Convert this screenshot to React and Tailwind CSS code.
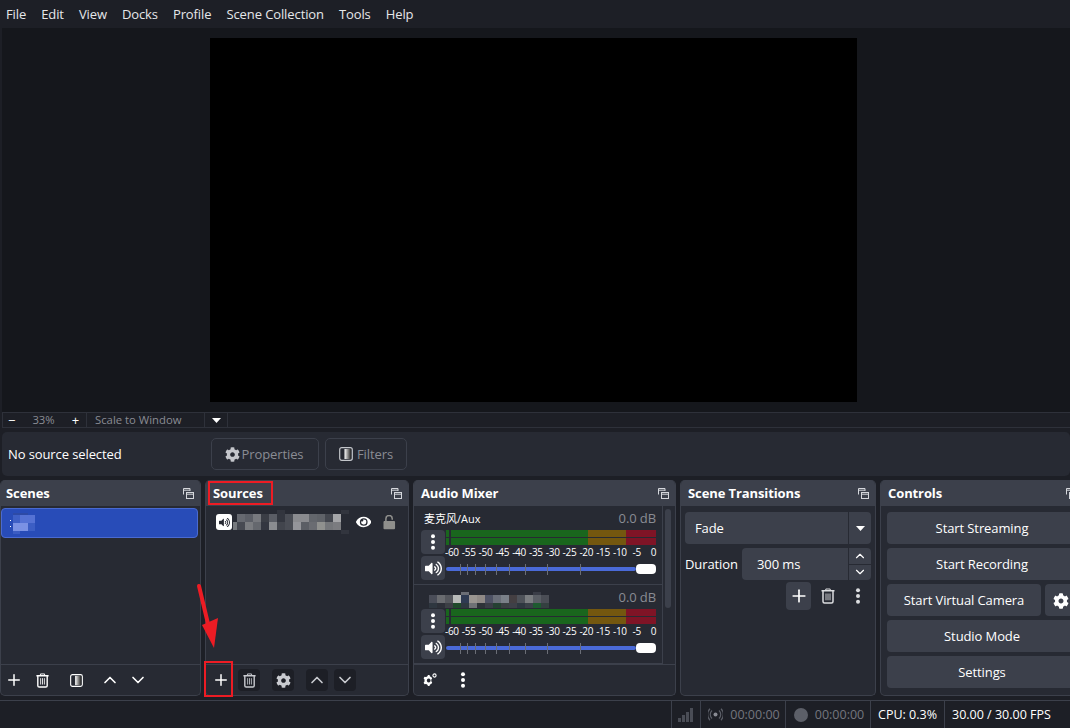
import React from "react";
import { FaCog, FaEye, FaVolumeUp } from "react-icons/fa";
import { Plus, ChevronUp, ChevronDown } from "lucide-react";

const Trash = ({ c = "#fff", s = 16 }) => (
  <svg width={s} height={s} viewBox="0 0 16 16" fill="none" stroke={c} strokeWidth="1.5">
    <path d="M1.5 2.8h13" strokeWidth="1.6" />
    <path d="M5.8 2.5V1h4.4v1.5" strokeWidth="1" />
    <path d="M3 3v10.5a1.5 1.5 0 0 0 1.5 1.5h7a1.5 1.5 0 0 0 1.5-1.5V3" />
    <path d="M6 5.5v6.8M8 5.5v6.8M10 5.5v6.8" strokeWidth="0.9" />
  </svg>
);

const Dots = ({ c = "#fff" }) => (
  <svg width="6" height="16" viewBox="0 0 6 16" fill={c}>
    <circle cx="3" cy="2.2" r="2" />
    <circle cx="3" cy="8" r="2" />
    <circle cx="3" cy="13.8" r="2" />
  </svg>
);

const FilterIcon = ({ s = 14, c = "#fff" }) => (
  <svg width={s} height={s} viewBox="0 0 14 14">
    <defs>
      <linearGradient id="fg">
        <stop offset="0" stopColor="#fff" />
        <stop offset="1" stopColor="#222" />
      </linearGradient>
    </defs>
    <rect x="0.7" y="0.7" width="12.6" height="12.6" rx="2" fill="none" stroke={c} strokeWidth="1.2" />
    <rect x="5.5" y="2" width="6.5" height="10" fill="url(#fg)" />
  </svg>
);

const Popout = () => (
  <svg width="11" height="11" viewBox="0 0 11 11" fill="none" stroke="#d5d7dc" strokeWidth="1">
    <path d="M.5 6.5v-6h6.5v2.5" />
    <path d="M.5 2.2h6.5" />
    <rect x="3.5" y="4.5" width="7" height="6" fill="#3c404b" />
    <path d="M3.5 6.2h7" />
  </svg>
);

const Mosaic = ({ cells, cols, rows, className = "" }) => (
  <div className={`grid shrink-0 ${className}`} style={{ gridTemplateColumns: cols, gridTemplateRows: rows }}>
    {cells.map((c, i) => (
      <div key={i} style={{ background: c }} />
    ))}
  </div>
);

const B = "transparent";
const F = "#32353e";
const sceneMosaic = [
  "#2d4aa6", "#2d4aa6", B,
  "#3f60c6", "#5572d4", "#5572d4",
  "#7b92e4", "#7b92e4", "#3c5ec4",
  "#3b5cc2", B, B,
];
const sourceMosaic = [
  B, B, B, B, B, B, F, B, B, B, B, B, B, B, F,
  B, "#666970", "#5c5f67", "#77797e", "#3a3d45", "#5a5d65", "#33363f", "#4a4d55", "#8a8b8f", "#8a8b8f", "#63666c", "#5f6268", "#44474f", "#a4a5a8", B,
  "#777a7e", "#474a52", "#7a7c80", "#65686e", "#333640", "#8a8c90", "#42454d", "#4a4d55", "#94959a", "#5b5e65", "#6a6c72", "#90918f", "#74767a", "#7b7c80", B,
  B, B, B, B, B, B, B, B, B, B, B, B, B, B, F,
];
const audioMosaic = [
  B, B, B, B, "#6a6d75", B, B, B, B, B, B, B, B, "#3a3d47", B,
  "#4a4d58", "#6a6c70", "#55575d", "#b8bab8", "#2e3a52", "#9a9590", "#908a86", "#4e5264", "#6a6e78", "#7a8088", "#443f42", "#4e5259", "#7a7d80", "#5a5e65", "#4a4d55",
  "#2f3740", "#2d3038", "#3c3f45", "#1f4a2a", "#2e3840", "#6f7175", "#2e3338", "#3a3d46", "#254032", "#3a3f42", "#3e4048", "#2e3740", "#3a4048", "#1e5a30", "#344040",
];

const Panel = ({ title, width, children, footer, titleClass = "" }) => (
  <div className={`${width} h-full shrink-0 flex flex-col rounded-[5px] border border-[#3c404b] border-t-0 bg-[#272a33] overflow-hidden`}>
    <div className="h-[26px] shrink-0 bg-[#3c404b] flex items-center justify-between pl-[6px] pr-[6px]">
      <span className={`text-[13px] font-bold text-white pt-px ${titleClass}`}>{title}</span>
      <Popout />
    </div>
    <div className="flex-1 min-h-0 relative">{children}</div>
    {footer}
  </div>
);

const ToolBtn = ({ children, dark, className = "" }) => (
  <div className={`w-[22px] h-[22px] flex items-center justify-center rounded-[4px] ${dark ? "bg-[#1d1f26]" : ""} ${className}`}>
    {children}
  </div>
);

const Footer = ({ children }) => (
  <div className="h-[31px] shrink-0 border-t border-[#3c404b] flex items-center">{children}</div>
);

const scale = ["-60", "-55", "-50", "-45", "-40", "-35", "-30", "-25", "-20", "-15", "-10", "-5", "0"];
const ticks = [14, 21, 29, 39, 50, 63, 79, 101, 134];

const Strip = ({ name }) => (
  <div className="h-[79px] border-b border-[#3c404b] pl-[7px] pr-[6px] flex flex-col">
    <div className="h-[24px] shrink-0 flex items-center justify-between pl-[3px]">
      {name}
      <span className="text-[13px] text-[#8a8c94] leading-none tracking-[-0.1px]">0.0 dB</span>
    </div>
    <div className="flex gap-[1px]">
      <div className="w-[24px] shrink-0 flex flex-col gap-[2px]">
        <div className="h-[24px] rounded-[4px] bg-[#3c404b] flex items-center justify-center"><Dots /></div>
        <div className="h-[24px] rounded-[4px] bg-[#3c404b] flex items-center justify-center"><FaVolumeUp size={17} color="#fff" /></div>
      </div>
      <div className="flex-1 min-w-0">
        <div className="h-[15px] flex flex-col justify-between">
          {[0, 1].map((k) => (
            <div key={k} className="h-[7px] flex">
              <div className="w-[3px] bg-[#19661d]" />
              <div className="w-[2px] bg-[#272a33]" />
              <div className="w-[137px] bg-[#19661d]" />
              <div className="w-[38px] bg-[#74570f]" />
              <div className="w-[30px] bg-[#7f1426]" />
            </div>
          ))}
        </div>
        <div className="h-[14px] flex items-center -ml-[2.5px] text-[10px] leading-none text-white tracking-[-0.3px]">
          {scale.map((s) => (
            <span key={s} className="w-[16.8px] shrink-0 text-center">{s}</span>
          ))}
        </div>
        <div className="relative h-[12px] mt-[4px] flex items-center">
          <div className="h-[4px] flex-1 rounded-full bg-[#4a6ad8]" />
          <div className="w-[20px] h-[10px] rounded-[4px] bg-white" />
          {ticks.map((t) => (
            <div key={t} className="absolute top-[1px] w-px h-[11px] bg-[#6a6d76]" style={{ left: t }} />
          ))}
        </div>
      </div>
    </div>
  </div>
);

const Btn = ({ children, className = "" }) => (
  <div className={`h-[32px] rounded-[4px] bg-[#3c404b] flex items-center justify-center text-[13px] text-white pt-px ${className}`}>{children}</div>
);

export default function App() {
  return (
    <div className="w-[1070px] h-[728px] overflow-hidden bg-[#1d1f26] flex flex-col relative text-white tracking-[-0.1px]" style={{ fontFamily: '"Open Sans", sans-serif' }}>
      {/* menu */}
      <div className="h-[28px] shrink-0 flex items-center gap-[15px] pl-[6px] pt-[2px] text-[13px] text-[#e6e7ea]">
        {["File", "Edit", "View", "Docks", "Profile", "Scene Collection", "Tools", "Help"].map((m) => (
          <span key={m}>{m}</span>
        ))}
      </div>
      {/* preview */}
      <div className="h-[384px] shrink-0 ml-[2px] bg-[#15171c] flex items-center justify-center pr-[2px]">
        <div className="w-[647px] h-[364px] bg-black ml-[-3px]" />
      </div>
      {/* zoom bar */}
      <div className="h-[16px] shrink-0 ml-[2px] border-y border-[#2e313a] flex items-center text-[11.3px] text-[#8a8c94]">
        <div className="w-[85px] h-full flex items-center border-x border-[#2e313a] pl-[6px] justify-between pr-[7px] pt-px">
          <span className="text-white text-[13px] leading-none -ml-[1px]">−</span>
          <span>33%</span>
          <span className="text-white text-[13px] leading-none">+</span>
        </div>
        <div className="w-[118px] h-full flex items-center border-r border-[#2e313a] pl-[8px] pt-px tracking-normal">Scale to Window</div>
        <div className="w-[23px] h-full flex items-center justify-center border-r border-[#2e313a]">
          <svg width="9" height="5" viewBox="0 0 9 5"><path d="M0 0h9L4.5 5z" fill="#fff" /></svg>
        </div>
      </div>
      {/* context */}
      <div className="h-[44px] shrink-0 mt-[4px] ml-[2px] rounded-[5px] bg-[#272a33] flex items-center pl-[6px] gap-[6px]">
        <div className="w-[197px] text-[13px] text-white pt-px">No source selected</div>
        <div className="w-[108px] h-[32px] rounded-[5px] border border-[#3c404b] flex items-center justify-center gap-[2px] text-[13px] text-[#8a8c94] pr-[2px]">
          <FaCog size={15} color="#c4c6cb" /> <span className="pt-px">Properties</span>
        </div>
        <div className="w-[82px] h-[32px] rounded-[5px] border border-[#3c404b] flex items-center justify-center gap-[4px] text-[13px] text-[#8a8c94]">
          <FilterIcon c="#c4c6cb" /> <span className="pt-px">Filters</span>
        </div>
      </div>
      {/* docks */}
      <div className="h-[216px] shrink-0 mt-[4px] flex gap-[4px] w-[1090px]">
        <Panel
          title="Scenes"
          width="w-[201px]"
          titleClass="-ml-[1px]"
          footer={
            <Footer>
              <div className="flex items-center">
                <ToolBtn className="ml-[2px]"><Plus size={18} color="#fff" strokeWidth={2} /></ToolBtn>
                <ToolBtn className="ml-[6px]"><Trash s={15} /></ToolBtn>
                <ToolBtn className="ml-[12px]"><FilterIcon s={13} /></ToolBtn>
                <ToolBtn className="ml-[12px]"><ChevronUp size={20} color="#fff" /></ToolBtn>
                <ToolBtn className="ml-[6px]"><ChevronDown size={20} color="#fff" /></ToolBtn>
              </div>
            </Footer>
          }
        >
          <div className="mt-[2px] ml-0 mr-[2px] h-[30px] rounded-[4px] bg-[#284cb8] border border-[#4a6ad0] flex items-center pl-[8px]">
            <div className="w-px flex flex-col gap-[5px] mr-[2px]">
              <div className="h-px bg-white" />
              <div className="h-px bg-white" />
            </div>
            <Mosaic cols="7px 8px 7px" rows="2px 8px 8px 3px" cells={sceneMosaic} />
          </div>
        </Panel>
        <Panel
          title="Sources"
          width="w-[204px]"
          titleClass="ml-[1px]"
          footer={
            <Footer>
              <div className="flex items-center">
                <ToolBtn className="ml-[4px]"><Plus size={18} color="#fff" strokeWidth={2} /></ToolBtn>
                <ToolBtn dark className="ml-[6px]"><Trash s={15} c="#c9cbd0" /></ToolBtn>
                <ToolBtn dark className="ml-[12px]"><FaCog size={15} color="#c9cbd0" /></ToolBtn>
                <ToolBtn dark className="ml-[12px]"><ChevronUp size={20} color="#c9cbd0" /></ToolBtn>
                <ToolBtn dark className="ml-[6px]"><ChevronDown size={20} color="#c9cbd0" /></ToolBtn>
              </div>
            </Footer>
          }
        >
          <div className="h-[30px] mt-[1px] flex items-center pl-[10px] pr-[12px]">
            <div className="w-[16px] h-[16px] rounded-[3px] bg-white flex items-center justify-center shrink-0">
              <FaVolumeUp size={11} color="#272a33" />
            </div>
            <Mosaic cols="4px repeat(14, 8px)" rows="4px 8px 8px 4px" cells={sourceMosaic} className="ml-[1px]" />
            <FaEye size={16} color="#fff" className="ml-[7px] mr-[12px]" />
            <svg width="13" height="15" viewBox="0 0 13 15" fill="#8f8f8c">
              <rect x="0.5" y="6" width="12" height="8.5" rx="1" />
              <path d="M3 6V3.6a3.3 3.3 0 0 1 6.6 0v1" fill="none" stroke="#8f8f8c" strokeWidth="1.6" />
            </svg>
          </div>
        </Panel>
        <Panel
          title="Audio Mixer"
          width="w-[263px]"
          titleClass="ml-[1px]"
          footer={
            <Footer>
              <div className="flex items-center ml-[4px]">
                <ToolBtn>
                  <svg width="15" height="14" viewBox="0 0 15 14">
                    <path fillRule="evenodd" fill="#fff" d="M4 4l1.2-.4L6 2h1.5l.5 1.6L9.3 4l.9 1.6L9.3 6.6 9.3 8.3 10.2 9.4 9.3 11 8 11.4 7.5 13H6l-.8-1.6L4 11l-1.4.3-1-1.5.9-1.2V6.4L1.6 5.2l1-1.5zM6.7 5.6a1.9 1.9 0 1 0 .01 0z" />
                    <circle cx="12.5" cy="2.5" r="1.6" fill="none" stroke="#fff" strokeWidth="1.1" />
                  </svg>
                </ToolBtn>
                <ToolBtn className="ml-[12px]"><Dots /></ToolBtn>
              </div>
            </Footer>
          }
        >
          <div className="h-full flex overflow-hidden">
            <div className="w-[249px] shrink-0 border-r border-[#3c404b]">
              <Strip name={<span className="text-[11px] text-white leading-none tracking-normal" style={{ fontFamily: '"Open Sans", "Noto Sans CJK SC", sans-serif' }}>麦克风/Aux</span>} />
              <Strip name={<Mosaic cols="repeat(15, 8px)" rows="3px 8px 5px" cells={audioMosaic} className="mt-[6px] ml-[5px]" />} />
            </div>
            <div className="flex-1 pl-[2px] pt-[3px]">
              <div className="w-[6px] h-[99px] rounded-full bg-[#3c404b]" />
            </div>
          </div>
        </Panel>
        <Panel title="Scene Transitions" width="w-[196px]" titleClass="ml-[1px]">
          <div className="px-[4px] pt-[6px] flex flex-col gap-[4px]">
            <div className="h-[32px] rounded-[4px] bg-[#3c404b] flex items-center text-[13px]">
              <span className="flex-1 pl-[10px] pt-px">Fade</span>
              <div className="w-[23px] h-full flex items-center justify-center border-l border-[#272a33]">
                <svg width="9" height="5" viewBox="0 0 9 5"><path d="M0 0h9L4.5 5z" fill="#fff" /></svg>
              </div>
            </div>
            <div className="h-[32px] flex items-center text-[13px]">
              <span className="w-[57px] shrink-0 pt-px">Duration</span>
              <div className="flex-1 h-full rounded-[4px] bg-[#3c404b] flex items-center">
                <span className="flex-1 pl-[15px] pt-px">300 ms</span>
                <div className="w-[23px] h-full flex flex-col border-l border-[#272a33]">
                  <div className="flex-1 flex items-center justify-center border-b border-[#272a33]"><ChevronUp size={14} color="#fff" /></div>
                  <div className="flex-1 flex items-center justify-center"><ChevronDown size={14} color="#fff" /></div>
                </div>
              </div>
            </div>
            <div className="flex items-center justify-end -mt-[2px]">
              <div className="w-[25px] h-[28px] rounded-[4px] bg-[#3c404b] flex items-center justify-center"><Plus size={20} color="#fff" /></div>
              <div className="w-[34px] flex justify-center"><Trash s={16} c="#dcdde0" /></div>
              <div className="w-[26px] flex justify-center"><Dots c="#dcdde0" /></div>
            </div>
          </div>
        </Panel>
        <Panel title="Controls" width="w-[204px]" titleClass="ml-[1px]">
          <div className="pl-[6px] pr-[6px] pt-[6px] flex flex-col gap-[4px]">
            <Btn>Start Streaming</Btn>
            <Btn>Start Recording</Btn>
            <div className="flex gap-[4px]">
              <Btn className="w-[154px]">Start Virtual Camera</Btn>
              <Btn className="flex-1"><FaCog size={16} color="#fff" /></Btn>
            </div>
            <Btn>Studio Mode</Btn>
            <Btn>Settings</Btn>
          </div>
        </Panel>
      </div>
      {/* status */}
      <div className="h-[28px] shrink-0 mt-[4px] border-t border-[#3c404b] flex items-center justify-end text-[12.5px] tracking-normal">
        <div className="h-full w-[30px] flex items-center justify-center border-x border-[#3c404b]">
          <svg width="16" height="14" viewBox="0 0 16 14" fill="#4a4d56">
            <rect x="0" y="10" width="3" height="4" /><rect x="4" y="7" width="3" height="7" /><rect x="8" y="4" width="3" height="10" /><rect x="12" y="0" width="3" height="14" />
          </svg>
        </div>
        <div className="h-full w-[85px] flex items-center justify-center gap-[7px] border-r border-[#3c404b] text-[#74767e] pl-[2px]">
          <svg width="15" height="13" viewBox="0 0 15 13" fill="none" stroke="#5c5f68" strokeWidth="1.2">
            <circle cx="7.5" cy="6.5" r="2" fill="#8a8c94" stroke="none" />
            <path d="M4 2.5a5.5 5.5 0 0 0 0 8M11 2.5a5.5 5.5 0 0 1 0 8M2 .8a8 8 0 0 0 0 11.4M13 .8a8 8 0 0 1 0 11.4" />
          </svg>
          <span className="pt-px">00:00:00</span>
        </div>
        <div className="h-full w-[85px] flex items-center justify-center gap-[7px] border-r border-[#3c404b] text-[#74767e] pl-[2px]">
          <div className="w-[14px] h-[14px] rounded-full bg-[#5c5f68]" />
          <span className="pt-px">00:00:00</span>
        </div>
        <div className="h-full w-[74px] flex items-center justify-center border-r border-[#3c404b] pt-px">CPU: 0.3%</div>
        <div className="h-full w-[125px] flex items-center pl-[7px] pt-px">30.00 / 30.00 FPS</div>
      </div>

      {/* annotations */}
      <div className="absolute left-[208px] top-[481px] w-[65px] h-[24px] border-2 border-[#ed1c24]" />
      <div className="absolute left-[204px] top-[661px] w-[29px] h-[36px] border-2 border-[#ed1c24]" />
      <svg className="absolute left-[190px] top-[580px]" width="40" height="75" viewBox="0 0 40 75">
        <path d="M9 6 L19 48" stroke="#ed1c24" strokeWidth="4" strokeLinecap="round" />
        <path d="M12 45 L28 38 L24 68z" fill="#ed1c24" />
      </svg>
    </div>
  );
}
